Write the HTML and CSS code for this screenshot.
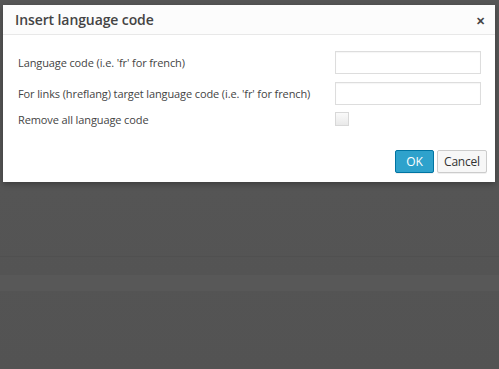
FILE: index.html
```html
<!DOCTYPE html>
<html>
<head>
<meta charset="utf-8">
<link rel="stylesheet" href="styles.css">
</head>
<body>
<div class="backdrop">
  <div class="band band-a"></div>
  <div class="band band-b"></div>
</div>
<div class="dialog">
  <div class="head">
    <div class="title">Insert language code</div>
    <div class="close">&#x2715;</div>
  </div>
  <div class="body">
    <div class="row">
      <label class="lbl">Language code (i.e. 'fr' for french)</label>
      <input class="field" type="text">
    </div>
    <div class="row">
      <label class="lbl">For links (hreflang) target language code (i.e. 'fr' for french)</label>
      <input class="field" type="text">
    </div>
    <div class="row row-check">
      <label class="lbl">Remove all language code</label>
      <span class="check"></span>
    </div>
  </div>
  <div class="foot">
    <button class="btn btn-primary">OK</button>
    <button class="btn btn-cancel">Cancel</button>
  </div>
</div>
</body>
</html>
```

FILE: styles.css
```css
html, body {
  margin: 0;
  padding: 0;
  height: 100%;
}
body {
  background: #575757;
  font-family: "Open Sans", "Noto Sans", sans-serif;
  overflow: hidden;
}
.backdrop {
  position: absolute;
  left: 0; right: 0; top: 0; bottom: 0;
  background: linear-gradient(#575757, #535353);
}
.band {
  position: absolute;
  left: 0; right: 0;
}
.band-a {
  top: 256px;
  height: 1px;
  background: #505050;
}
.band-b {
  top: 274px;
  height: 16px;
  background: #585858;
  border-top: 1px solid #545454;
  border-bottom: 1px solid #545454;
}
.dialog {
  position: absolute;
  left: 3px;
  top: 5px;
  width: 492px;
  height: 177px;
  background: #fff;
  box-shadow: 0 2px 6px rgba(0,0,0,0.3);
  display: flex;
  flex-direction: column;
}
.head {
  height: 29px;
  background: #fcfcfc;
  border-bottom: 1px solid #e8e8e8;
  display: flex;
  align-items: center;
  justify-content: space-between;
  padding: 0 10px 0 12px;
}
.title {
  font-size: 14px;
  font-weight: 600;
  color: #444;
  letter-spacing: -0.1px;
}
.close {
  font-size: 11px;
  font-weight: 700;
  color: #444;
  margin-top: 2px;
}
.body {
  padding: 16px 14px 0 15px;
  display: flex;
  flex-direction: column;
}
.row {
  display: flex;
  align-items: center;
  justify-content: space-between;
  height: 23px;
  margin-bottom: 8px;
}
.row-check {
  height: 14px;
  margin-top: -1px;
}
.lbl {
  font-size: 11px;
  color: #444;
  letter-spacing: -0.11px;
}
.field {
  box-sizing: border-box;
  width: 146px;
  height: 23px;
  margin: 0;
  border: 1px solid #ddd;
  box-shadow: inset 0 1px 1px rgba(0,0,0,0.04);
  background: #fff;
  padding: 0 4px;
}
.check {
  display: block;
  box-sizing: border-box;
  width: 14px;
  height: 14px;
  margin-right: 132px;
  border: 1px solid #d8d8d8;
  background: linear-gradient(#fafafa, #e9e9e9);
}
.foot {
  margin-top: auto;
  display: flex;
  justify-content: flex-end;
  gap: 3px;
  padding: 0 8px 9px 0;
}
.btn {
  box-sizing: border-box;
  height: 23px;
  padding: 0;
  font-family: "Open Sans", "Noto Sans", sans-serif;
  font-size: 12px;
  letter-spacing: -0.2px;
  color: #333;
  background: #f7f7f7;
  border: 1px solid #ccc;
  border-radius: 2px;
  box-shadow: 0 1px 0 rgba(0,0,0,0.06);
}
.btn-primary {
  width: 39px;
  background: #2ea2cc;
  border-color: #0074a2;
  color: #fff;
}
.btn-cancel {
  width: 50px;
}
```
